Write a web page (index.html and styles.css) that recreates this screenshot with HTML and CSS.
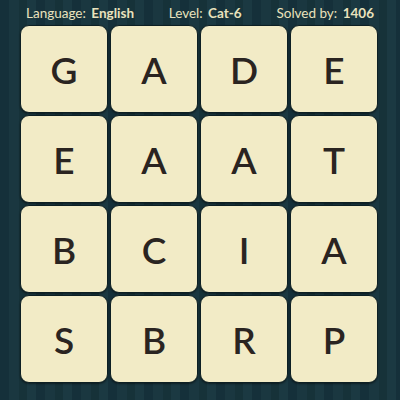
FILE: index.html
```html
<!DOCTYPE html>
<html>
<head>
<meta charset="utf-8">
<link rel="stylesheet" href="styles.css">
</head>
<body>
<div class="page">
  <div class="header">
    <span class="item">Language: <b>English</b></span>
    <span class="item">Level: <b>Cat-6</b></span>
    <span class="item">Solved by: <b>1406</b></span>
  </div>
  <div class="board">
    <div class="tile">G</div><div class="tile">A</div><div class="tile">D</div><div class="tile">E</div>
    <div class="tile">E</div><div class="tile">A</div><div class="tile">A</div><div class="tile">T</div>
    <div class="tile">B</div><div class="tile">C</div><div class="tile">I</div><div class="tile">A</div>
    <div class="tile">S</div><div class="tile">B</div><div class="tile">R</div><div class="tile">P</div>
  </div>
</div>
</body>
</html>
```
FILE: styles.css
```css
html, body {
  margin: 0;
  padding: 0;
}
body {
  width: 400px;
  height: 400px;
  overflow: hidden;
  background: repeating-linear-gradient(90deg, #15303a 0 9px, #1a3740 9px 19px, #163239 19px 27px, #1b3942 27px 36px);
  font-family: Lato, "Open Sans", sans-serif;
}
.page {
  width: 400px;
  height: 400px;
}
.header {
  height: 25px;
  display: flex;
  justify-content: space-between;
  align-items: center;
  padding: 0 26px 0 26px;
  color: #e9e2bd;
  font-size: 13.5px;
  box-sizing: border-box;
}
.item b {
  font-weight: 700;
  margin-left: 2px;
}
.board {
  margin-left: 20px;
  width: 360px;
  display: grid;
  grid-template-columns: repeat(4, 88px);
  grid-auto-rows: 88px;
  gap: 2px;
  padding: 0;
}
.tile {
  background: #f2ebc6;
  border: 1px solid #0d1f23;
  border-radius: 9px;
  box-shadow: 0 1px 2px rgba(0,0,0,0.45);
  display: flex;
  align-items: center;
  justify-content: center;
  font-size: 37px;
  font-weight: 600;
  color: #2a2421;
  box-sizing: border-box;
}
```
